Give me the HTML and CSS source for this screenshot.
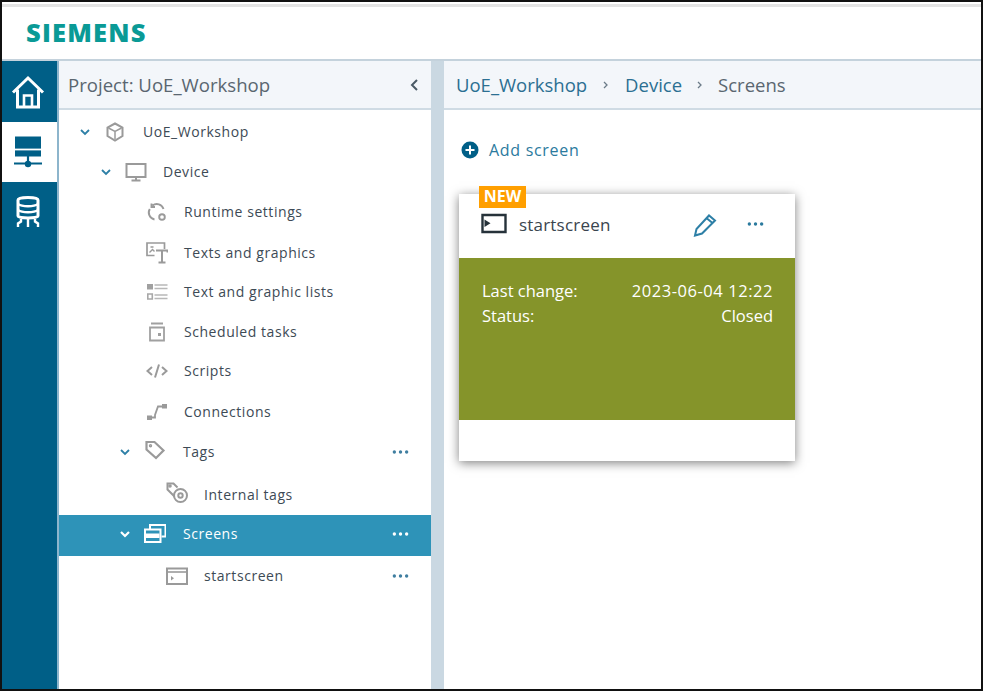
FILE: index.html
```html
<!DOCTYPE html>
<html lang="en">
<head>
<meta charset="utf-8">
<title>Screens</title>
<link rel="stylesheet" href="styles.css">
</head>
<body>
<svg class="defs" width="0" height="0" aria-hidden="true">
  <symbol id="dots3" viewBox="0 0 18 4"><circle cx="2.500" cy="2" r="1.800"/><circle cx="9" cy="2" r="1.800"/><circle cx="15.500" cy="2" r="1.800"/></symbol>
</svg>
<div class="frame">
  <header class="topbar"><span class="logo">SIEMENS</span></header>
  <div class="main">
    <nav class="rail">
      <div class="rail-item rail-first">
        <svg width="36" height="36" viewBox="0 0 36 36" fill="none" stroke="#fff" stroke-width="3"><path d="M3 18.500 18 4l15 14.500"/><path d="M7.500 15.500V33h21V15.500"/><path d="M14 32V21.500h8V32" stroke-width="2.600"/></svg>
      </div>
      <div class="rail-item rail-active">
        <svg width="36" height="36" viewBox="0 0 36 36" fill="none"><path d="M5 2.500h26v20H5z" fill="#005f87"/><path d="M5 15.500h26" stroke="#fff" stroke-width="1.800"/><path d="M18 22v8M4 29.500h28" stroke="#005f87" stroke-width="2.200"/><circle cx="18" cy="30" r="3.200" fill="#005f87"/></svg>
      </div>
      <div class="rail-item">
        <svg width="36" height="36" viewBox="0 0 36 36" fill="none" stroke="#fff" stroke-width="3"><path d="M8 6c0-3.500 20-3.500 20 0v16c0 2.500-20 2.500-20 0z"/><path d="M8 10c4 3 16 3 20 0M8 16c4 3 16 3 20 0" stroke-width="2.400"/><path d="M11 25v2.500l-3 2V33M18 25v8M25 25v2.500l3 2V33" stroke-width="2.400"/></svg>
      </div>
    </nav>
    <aside class="side">
      <div class="panel-head side-head">
        <span class="project">Project: UoE_Workshop</span>
        <svg class="collapse" width="10" height="14" viewBox="0 0 10 14" fill="none" stroke="#4a5a66" stroke-width="2"><path d="M8 2 3 7l5 5"/></svg>
      </div>
      <ul class="tree">
        <li class="row lvl0">
          <svg class="chev" width="14" height="14" viewBox="0 0 14 14" fill="none" stroke="#2d7fa6" stroke-width="1.800"><path d="m3 5 4 4 4-4"/></svg>
          <svg class="ico" width="22" height="22" viewBox="0 0 22 22" fill="none" stroke="#9a9a9a" stroke-width="2"><path d="m11 2.500 7.500 4v8.500L11 19.500 3.500 15V6.500z"/><path d="m4.500 7 6.500 3.500L17.500 7M11 10.500V18" stroke-width="1.500"/></svg>
          <span class="label">UoE_Workshop</span>
        </li>
        <li class="row lvl1">
          <svg class="chev" width="14" height="14" viewBox="0 0 14 14" fill="none" stroke="#2d7fa6" stroke-width="1.800"><path d="m3 5 4 4 4-4"/></svg>
          <svg class="ico" width="22" height="22" viewBox="0 0 22 22" fill="none" stroke="#9a9a9a" stroke-width="2"><path d="M1.500 3h19v13h-19zM11 16v3M6.500 19.500h9"/></svg>
          <span class="label">Device</span>
        </li>
        <li class="row lvl2">
          <span class="chev"></span>
          <svg class="ico" width="22" height="22" viewBox="0 0 22 22" fill="none" stroke="#9a9a9a" stroke-width="1.900"><path d="M17.500 8A7 7 0 0 0 6.500 4.500M5.500 2.500v3.500h3.500"/><path d="M3.800 8A7 7 0 0 0 8.500 18.500"/><circle cx="16" cy="16" r="2.800"/></svg>
          <span class="label">Runtime settings</span>
        </li>
        <li class="row lvl2 down">
          <span class="chev"></span>
          <svg class="ico" width="22" height="22" viewBox="0 0 22 22" fill="none" stroke="#9a9a9a" stroke-width="1.700"><path d="M8.500 13.500H1V1h17.500v6"/><path d="M4.500 5h3M3.500 10.500l3-3 2 2" stroke-width="1.400"/><path d="M10 8.500h11.500v2M16 8.500V20M12.500 20.500h7" stroke-width="2"/></svg>
          <span class="label">Texts and graphics</span>
        </li>
        <li class="row lvl2 tight">
          <span class="chev"></span>
          <svg class="ico" width="22" height="22" viewBox="0 0 22 22" fill="none" stroke="#b8b8b8"><path d="M1 3h6v5.500H1z" fill="#a0a0a0" stroke="none"/><path d="M1.800 13h4.500v5H1.800z" stroke-width="1.600" stroke="#a8a8a8"/><path d="M8.500 4h13M8.500 7.500h13M8.500 14h13M8.500 17.500h13" stroke-width="1.500"/></svg>
          <span class="label">Text and graphic lists</span>
        </li>
        <li class="row lvl2">
          <span class="chev"></span>
          <svg class="ico" width="22" height="22" viewBox="0 0 22 22" fill="none" stroke="#a0a0a0" stroke-width="1.800"><path d="M4 6.500h14v13H4zM5 2.500h12"/><rect x="12" y="12" width="3" height="3" fill="#a0a0a0" stroke="none"/></svg>
          <span class="label">Scheduled tasks</span>
        </li>
        <li class="row lvl2 tight">
          <span class="chev"></span>
          <svg class="ico" width="22" height="22" viewBox="0 0 22 22" fill="none" stroke="#9a9a9a" stroke-width="2"><path d="M6 7 1.500 11 6 15M16 7l4.500 4-4.500 4M13 4.500 9 17.500"/></svg>
          <span class="label">Scripts</span>
        </li>
        <li class="row lvl2 down">
          <span class="chev"></span>
          <svg class="ico" width="22" height="22" viewBox="0 0 22 22" fill="none" stroke="#9a9a9a" stroke-width="1.800"><path d="M3.500 16.500h5.500L9 14l3-8.500H18"/><rect x="1" y="14.500" width="5" height="4.500" fill="#9a9a9a" stroke="none"/><rect x="16" y="3" width="5" height="4.500" fill="#9a9a9a" stroke="none"/></svg>
          <span class="label">Connections</span>
        </li>
        <li class="row lvl1b down">
          <svg class="chev" width="14" height="14" viewBox="0 0 14 14" fill="none" stroke="#2d7fa6" stroke-width="1.800"><path d="m3 5 4 4 4-4"/></svg>
          <svg class="ico ico-up" width="22" height="22" viewBox="0 0 22 22" fill="none" stroke="#9a9a9a" stroke-width="2.200"><path d="M2.500 3h8l9 8.500-7.500 7.500L2.500 10.500z"/><circle cx="6.500" cy="6.800" r="1" stroke-width="1.400"/></svg>
          <span class="label">Tags</span>
          <svg class="dots"><use href="#dots3"/></svg>
        </li>
        <li class="row lvl3 tall">
          <span class="chev"></span>
          <svg class="ico ico-up" width="22" height="22" viewBox="0 0 22 22" fill="none" stroke="#9a9a9a" stroke-width="2"><path d="M8.500 14.500 1.500 7.500v-6h6l4 4"/><circle cx="4" cy="4" r=".8"/><circle cx="14.500" cy="13.500" r="6.500"/><circle cx="14.500" cy="13.500" r="2.200"/></svg>
          <span class="label">Internal tags</span>
        </li>
        <li class="row lvl1b sel-row selected">
          <svg class="chev" width="14" height="14" viewBox="0 0 14 14" fill="none" stroke="#fff" stroke-width="2.200"><path d="m3 5 4 4 4-4"/></svg>
          <svg class="ico" width="22" height="22" viewBox="0 0 22 22" fill="none" stroke="#fff" stroke-width="2"><path d="M6 6V2h15.500v11.500H17.500"/><path d="M1 6.500h15.500v12.500H1z"/><rect x="2" y="10.500" width="13.500" height="4.500" fill="#fff" stroke="none"/></svg>
          <span class="label">Screens</span>
          <svg class="dots"><use href="#dots3"/></svg>
        </li>
        <li class="row lvl3">
          <span class="chev"></span>
          <svg class="ico" width="22" height="22" viewBox="0 0 22 22" fill="none" stroke="#9a9a9a" stroke-width="2"><path d="M1 3.500h20v15.500H1z"/><path d="M1 7h20" stroke-width="1.600"/><path d="M5 11v4.500l3-2.200z" fill="#9a9a9a" stroke="none"/></svg>
          <span class="label">startscreen</span>
          <svg class="dots"><use href="#dots3"/></svg>
        </li>
      </ul>
    </aside>
    <div class="splitter"></div>
    <main class="content">
      <div class="panel-head crumbs">
        <span class="crumb">UoE_Workshop</span>
        <svg class="sep sep-first" width="8" height="10" viewBox="0 0 8 10" fill="none" stroke="#6b7b88" stroke-width="1.300"><path d="m2 2 3 3-3 3"/></svg>
        <span class="crumb">Device</span>
        <svg class="sep" width="8" height="10" viewBox="0 0 8 10" fill="none" stroke="#6b7b88" stroke-width="1.300"><path d="m2 2 3 3-3 3"/></svg>
        <span class="crumb crumb-last">Screens</span>
      </div>
      <div class="add">
        <svg width="18" height="18" viewBox="0 0 18 18"><circle cx="9" cy="9" r="8.500" fill="#005f87"/><path d="M9 4.500v9M4.500 9h9" stroke="#fff" stroke-width="2"/></svg>
        <span>Add screen</span>
      </div>
      <section class="card">
        <span class="badge">NEW</span>
        <div class="card-head">
          <svg class="card-ico" width="26" height="22" viewBox="0 0 26 22" fill="none" stroke="#26323a" stroke-width="2.400"><path d="M1.500 2h23v17h-23z"/><path d="M3.500 6.500v7.500l6-3.700z" fill="#26323a" stroke="none"/></svg>
          <span class="card-title">startscreen</span>
          <svg class="edit" width="26" height="24" viewBox="0 0 26 24" fill="none" stroke="#2d7fa6" stroke-width="2"><path d="M3 22.500 4.500 16 17 2.500l6 5L10 20.500zM15 5.500l5.500 4.500"/></svg>
          <svg class="dots dots-card"><use href="#dots3"/></svg>
        </div>
        <div class="card-body">
          <div class="meta"><span>Last change:</span><span class="stamp">2023-06-04 12:22</span></div>
          <div class="meta"><span>Status:</span><span>Closed</span></div>
        </div>
        <div class="card-foot"></div>
      </section>
    </main>
  </div>
</div>
</body>
</html>
```
FILE: styles.css
```css
* { box-sizing: border-box; }
html, body { margin: 0; padding: 0; height: 100%; }
body { font-family: "Open Sans", "Noto Sans", sans-serif; color: #3d4a55; background: #fff; overflow: hidden; }
.defs { display: block; height: 0; }
.frame { width: 983px; height: 691px; border: 2px solid #111; display: flex; flex-direction: column; background: #fff; overflow: hidden; }
.topbar { height: 57px; flex: none; border-top: 3px solid #e4e4e4; margin-top: 2px; border-bottom: 2px solid #c4d2dc; padding-left: 24px; display: flex; align-items: center; }
.logo { font-weight: 800; font-size: 25.500px; color: #0a9a96; letter-spacing: 1.200px; position: relative; top: -1px; }
.main { flex: 1; display: flex; min-height: 0; }
.rail { width: 55px; flex: none; background: #005f87; display: flex; flex-direction: column; }
.rail-item { height: 60px; display: flex; align-items: center; justify-content: center; padding-right: 3px; }
.rail-first { height: 61px; }
.rail-active { background: #fff; }
.side { width: 374px; flex: none; display: flex; flex-direction: column; border-left: 2px solid #8db5cc; }
.panel-head { height: 49px; flex: none; background: #f3f6fa; border-bottom: 2px solid #cfdbe4; display: flex; align-items: center; }
.side-head { padding: 0 12px 0 9px; justify-content: space-between; }
.project { font-size: 18.600px; color: #5a6670; }
.tree { list-style: none; margin: 2px 0 0; padding: 0; }
.row { height: 40px; display: flex; align-items: center; font-size: 14px; color: #3d4a55; padding-right: 22px; }
.down { padding-top: 2px; }
.tall { height: 44px; padding-top: 3px; }
.tight { height: 39.500px; }
.sel-row { height: 41px; padding-bottom: 3px; }
.lvl0 { padding-left: 19px; }
.lvl1 { padding-left: 40px; }
.lvl1b { padding-left: 59px; }
.lvl2 { padding-left: 61px; }
.lvl3 { padding-left: 81px; }
.chev { width: 14px; height: 14px; flex: none; margin-right: 12px; }
.ico { flex: none; margin-right: 16px; }
.lvl0 .ico, .lvl1b .ico { margin-right: 17px; }
.ico-up { position: relative; top: -2px; }
.label { flex: 1; letter-spacing: .55px; position: relative; top: -.5px; }
.dots { width: 17px; height: 4px; flex: none; fill: #3f7ea0; }
.selected { background: #2e93b8; color: #fff; }
.selected .dots { fill: #fff; }
.splitter { width: 13px; flex: none; background: #cad8e2; }
.content { flex: 1; min-width: 0; }
.crumbs { padding-left: 12px; font-size: 18.500px; gap: 14px; }
.crumb { color: #2b6f92; }
.sep { flex: none; }
.sep-first { margin: 0 1px; }
.crumb-last { color: #5a6670; }
.add { display: flex; align-items: center; gap: 10px; margin: 30px 0 0 17px; font-size: 16px; font-weight: 500; letter-spacing: .7px; color: #2b7a9e; height: 20px; }
.card { position: relative; width: 336px; height: 267px; margin: 34px 0 0 15px; background: #fff; box-shadow: 0 2px 10px rgba(0, 0, 0, .5); display: flex; flex-direction: column; }
.badge { position: absolute; left: 20px; top: -8px; width: 47px; height: 22px; background: #ff9f00; color: #fff; font-size: 16px; font-weight: 700; text-align: center; line-height: 21px; }
.card-head { height: 64px; flex: none; display: flex; align-items: center; padding: 0 31px 0 22px; }
.card-head > * { position: relative; top: -2px; }
.card-ico { flex: none; margin-right: 12px; }
.card-title { flex: 1; font-size: 17px; letter-spacing: .2px; color: #3a454e; }
.edit { flex: none; margin-right: 29px; top: -1px; }
.dots-card { fill: #2b7a9e; }
.card-body { height: 162px; flex: none; background: #85942a; color: #fff; padding: 20px 22px 0 23px; font-size: 16.500px; line-height: 25px; }
.meta { display: flex; justify-content: space-between; }
.stamp { letter-spacing: .55px; }
.card-foot { flex: 1; }
```
